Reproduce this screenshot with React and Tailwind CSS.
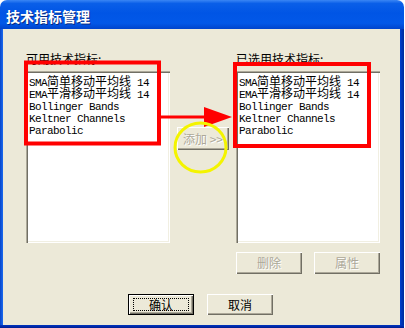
import React from "react";

const items = [
  "SMA简单移动平均线 14",
  "EMA平滑移动平均线 14",
  "Bollinger Bands",
  "Keltner Channels",
  "Parabolic",
];

function ListLine({ text }) {
  const parts = text.match(/[\u4e00-\u9fff]+|[^\u4e00-\u9fff]+/g);
  return (
    <div className="h-[12px] leading-[12px] whitespace-pre text-black">
      {parts.map((p, i) =>
        /[\u4e00-\u9fff]/.test(p) ? (
          <span key={i} className="text-[12px] leading-[12px] font-['Noto_Sans_CJK_SC',sans-serif]">
            {p}
          </span>
        ) : (
          <span key={i} className="text-[11px] leading-[12px] tracking-[-0.6px] font-['Liberation_Mono',monospace]">
            {p}
          </span>
        )
      )}
    </div>
  );
}

function ListBox({ rows }) {
  return (
    <div className="w-[144px] h-[172px] bg-white pl-[3px] pt-[2px] shadow-[inset_1px_1px_0_#aca899,inset_2px_2px_0_#716f64,inset_-1px_-1px_0_#fff,inset_-2px_-2px_0_#f1efe2]">
      {rows.map((r) => (
        <ListLine key={r} text={r} />
      ))}
    </div>
  );
}

function Btn({ children, disabled, main, className = "" }) {
  return (
    <div
      className={
        "flex items-center justify-center text-[12px] font-['Noto_Sans_CJK_SC',sans-serif] bg-[#ece9d8] " +
        (main
          ? "border border-black shadow-[inset_1px_1px_0_#fff,inset_-1px_-1px_0_#716f64,inset_-2px_-2px_0_#aca899] "
          : "shadow-[inset_1px_1px_0_#fff,inset_-1px_-1px_0_#716f64,inset_-2px_-2px_0_#aca899] ") +
        (disabled ? "text-[#aca899] [text-shadow:1px_1px_0_#fff] " : "text-black ") +
        className
      }
    >
      {main ? (
        <div className="w-[56px] h-[13px] border border-dotted border-black flex items-center justify-center leading-[13px]">
          {children}
        </div>
      ) : (
        children
      )}
    </div>
  );
}

export default function App() {
  return (
    <div className="relative w-[405px] h-[328px] bg-white">
      <div className="flex flex-col w-[404px] h-[328px] rounded-t-[7px] overflow-hidden">
        <div className="h-[29px] flex items-center pl-[6px] bg-[linear-gradient(to_bottom,#3a86f4_0%,#0a5fe8_12%,#0055e5_45%,#0258e8_80%,#0044cc_100%)]">
          <span className="text-white font-bold text-[14px] leading-[14px] pt-[2px] font-['Noto_Sans_CJK_SC',sans-serif] [text-shadow:1px_1px_0_#0a2a80]">
            技术指标管理
          </span>
        </div>
        <div className="flex-1 flex bg-[#0052e0]">
          <div className="w-[3px] bg-[linear-gradient(to_right,#0845c8,#1a6af0)]" />
          <div className="flex-1 flex flex-col bg-[#ece9d8] pt-[24px] font-['Noto_Sans_CJK_SC',sans-serif]">
            <div className="flex pl-[23px]">
              <div className="flex flex-col">
                <div className="text-[12px] leading-[12px] h-[12px] mb-[6px] text-black">可用技术指标:</div>
                <ListBox rows={items} />
              </div>
              <div className="w-[66px] flex flex-col items-center pt-[74px]">
                <Btn disabled className="w-[52px] h-[23px]">
                  添加 &gt;&gt;
                </Btn>
              </div>
              <div className="flex flex-col">
                <div className="text-[12px] leading-[12px] h-[12px] mb-[6px] text-black">已选用技术指标:</div>
                <ListBox rows={items} />
              </div>
            </div>
            <div className="flex pl-[233px] gap-[12px] mt-[9px]">
              <Btn disabled className="w-[66px] h-[22px]">删除</Btn>
              <Btn disabled className="w-[66px] h-[22px]">属性</Btn>
            </div>
            <div className="flex pl-[125px] gap-[13px] mt-[20px]">
              <Btn main className="w-[66px] h-[21px]">确认</Btn>
              <Btn className="w-[66px] h-[21px]">取消</Btn>
            </div>
          </div>
          <div className="w-[4px] bg-[linear-gradient(to_right,#0040d0,#002a9a)]" />
        </div>
        <div className="h-[3px] bg-[linear-gradient(to_bottom,#0036c0,#001c90)]" />
      </div>
      <svg className="absolute inset-0 pointer-events-none" width="405" height="328" viewBox="0 0 405 328">
        <rect x="26" y="62.5" width="133" height="81" fill="none" stroke="#ff0000" strokeWidth="4" />
        <rect x="235" y="64" width="134" height="82" fill="none" stroke="#ff0000" strokeWidth="4" />
        <rect x="161" y="115.5" width="47" height="3" fill="#ff0000" />
        <polygon points="204,107 232,117 204,127" fill="#ff0000" />
        <ellipse cx="200.5" cy="147.5" rx="25.5" ry="24.5" fill="none" stroke="#f4f400" strokeWidth="3" />
      </svg>
    </div>
  );
}
